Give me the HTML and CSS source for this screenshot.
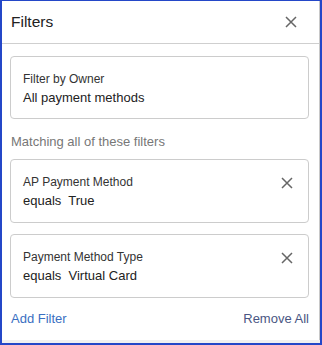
FILE: index.html
```html
<!DOCTYPE html>
<html lang="en">
<head>
  <meta charset="UTF-8" />
  <title>Filters</title>
  <link rel="stylesheet" href="styles.css">
</head>
<body>
  <div class="frame">
    <div class="panel">
      <div class="header">
        <h2>Filters</h2>
        <span class="close">
          <svg width="12" height="12" viewBox="0 0 12 12"><path d="M1 1L11 11M11 1L1 11" stroke="#666" stroke-width="1.5"/></svg>
        </span>
      </div>

      <div class="content">
        <div class="card owner">
          <div class="label">Filter by Owner</div>
          <div class="value">All payment methods</div>
        </div>

        <div class="section-title">Matching all of these filters</div>

        <div class="card">
          <div class="card-text">
            <div class="label">AP Payment Method</div>
            <div class="value">equals&nbsp; True</div>
          </div>
          <span class="remove">
            <svg width="12" height="12" viewBox="0 0 12 12"><path d="M1 1L11 11M11 1L1 11" stroke="#666" stroke-width="1.5"/></svg>
          </span>
        </div>

        <div class="card">
          <div class="card-text">
            <div class="label">Payment Method Type</div>
            <div class="value">equals&nbsp; Virtual Card</div>
          </div>
          <span class="remove">
            <svg width="12" height="12" viewBox="0 0 12 12"><path d="M1 1L11 11M11 1L1 11" stroke="#666" stroke-width="1.5"/></svg>
          </span>
        </div>

        <div class="footer">
          <a class="add">Add Filter</a>
          <a class="remove-all">Remove All</a>
        </div>
      </div>
    </div>
  </div>
</body>
</html>
```

FILE: styles.css
```css
body {
  margin: 0;
  font-family: "Liberation Sans", Arial, sans-serif;
  color: #333;
}

.frame {
  width: 318px;
  height: 342px;
  border-top: 1px solid #2447c8;
  border-left: 2px solid #2447c8;
  border-right: 2px solid #2447c8;
  border-bottom: 2px solid #2447c8;
  background: #f0f0f0;
}

.panel {
  width: 317px;
  height: 339px;
  background: white;
  border-right: 1px solid #c8c8c8;
}

.header {
  height: 42px;
  border-bottom: 1px solid #cfcfcf;
  display: flex;
  align-items: center;
  justify-content: space-between;
  padding: 0 22px 0 9px;
}

h2 {
  margin: 0;
  font-size: 15.5px;
  font-weight: normal;
  color: #222;
}

.close, .remove {
  display: flex;
}

.content {
  padding: 12px 10px 0 8px;
}

.card {
  border: 1px solid #cccccc;
  border-radius: 4px;
  padding: 13px 12px 11px 12px;
  display: flex;
  justify-content: space-between;
  align-items: flex-start;
  flex-direction: column;
}

.card.owner {
  padding-bottom: 10px;
}

.card:has(.remove) {
  flex-direction: row;
  margin-bottom: 11px;
}

.remove {
  margin-top: 4px;
  margin-right: 3px;
}

.label {
  font-size: 12px;
  line-height: 18px;
  color: #333;
}

.value {
  font-size: 13px;
  line-height: 20px;
  color: #222;
}

.section-title {
  font-size: 13px;
  color: #777;
  line-height: 20px;
  margin: 13px 0 7px 1px;
}

.footer {
  display: flex;
  justify-content: space-between;
  font-size: 13px;
  line-height: 20px;
  padding: 0 0 0 1px;
  margin-top: 0;
}

.add {
  color: #3a6fc2;
}

.remove-all {
  color: #4a5683;
}
```
